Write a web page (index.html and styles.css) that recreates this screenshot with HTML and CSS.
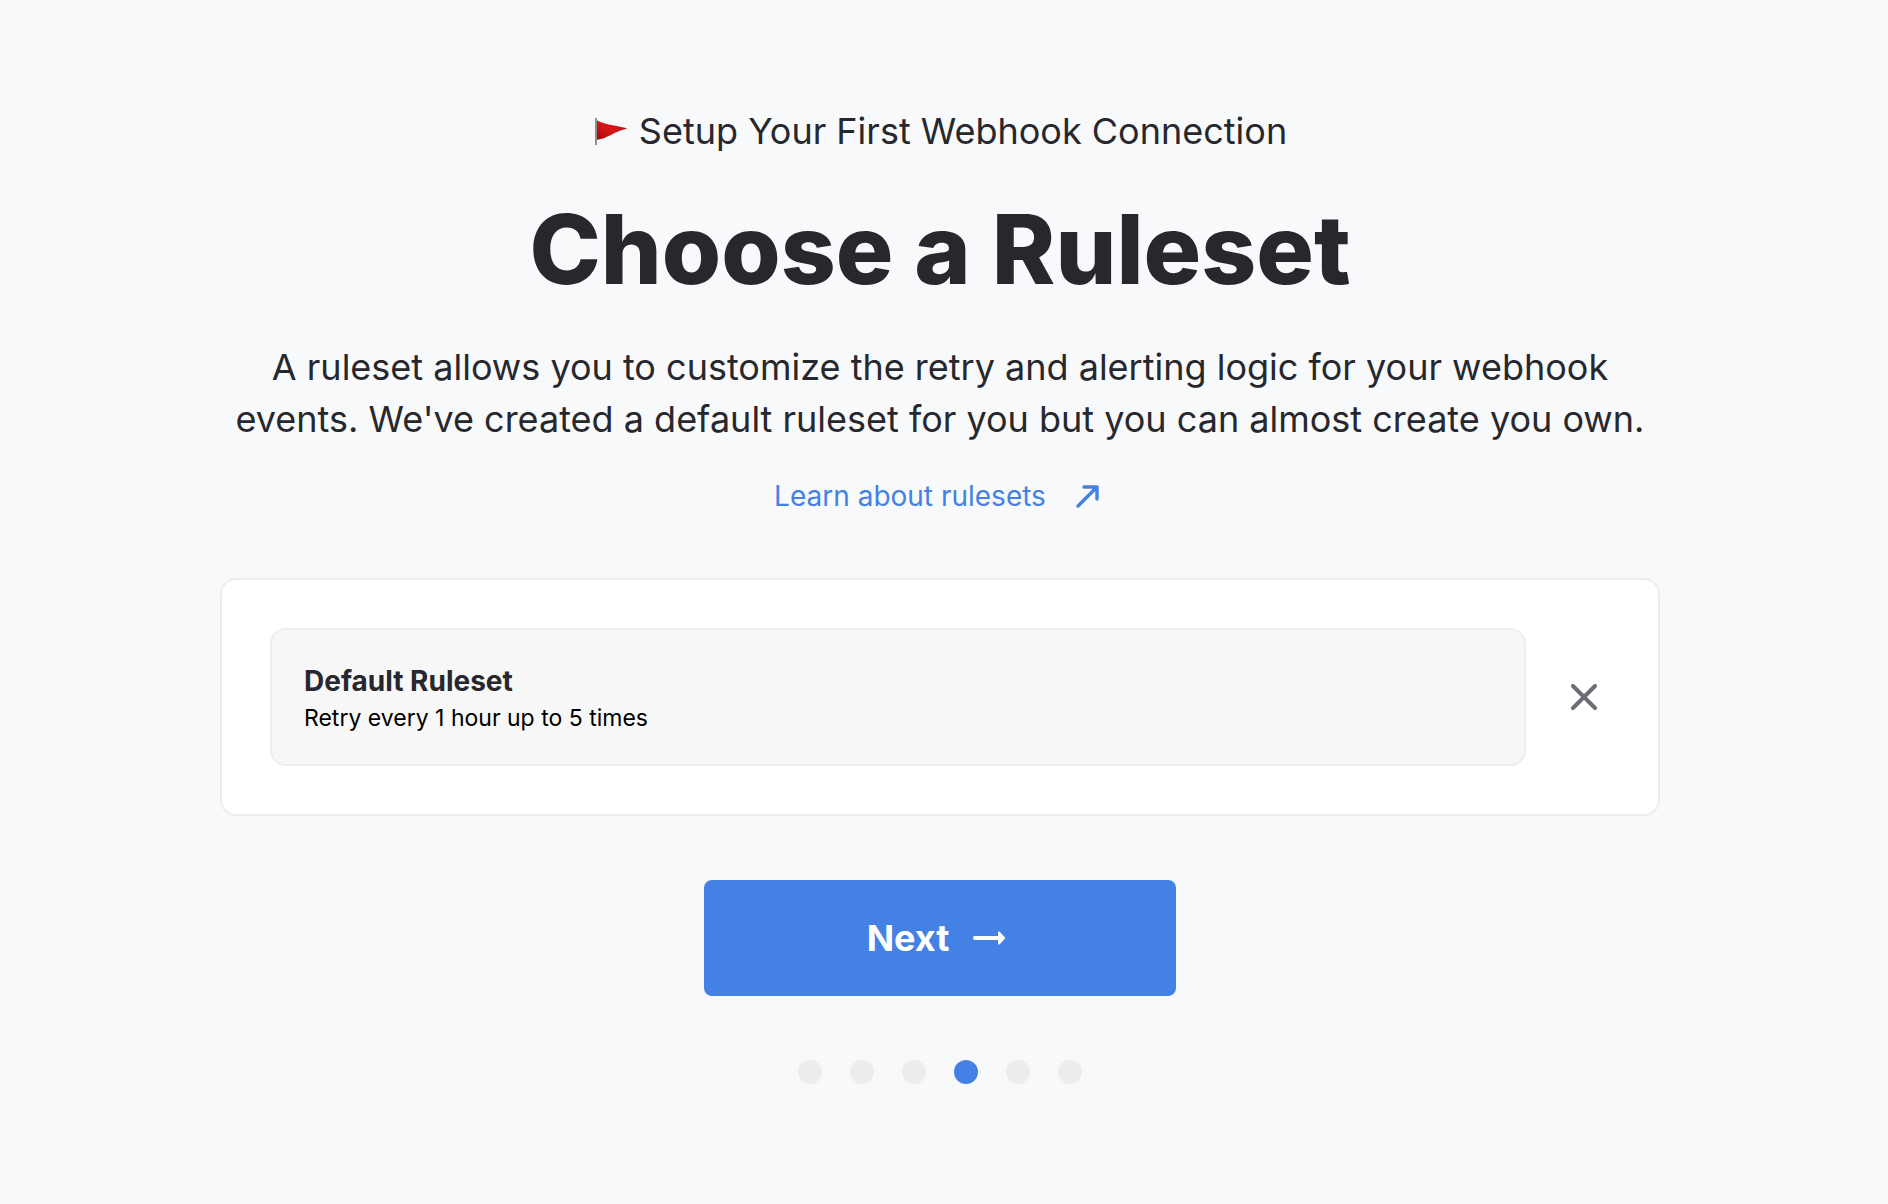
FILE: index.html
```html
<!DOCTYPE html>
<html lang="en">
<head>
<meta charset="utf-8">
<meta name="viewport" content="width=device-width, initial-scale=1">
<title>Choose a Ruleset</title>
<link rel="stylesheet" href="styles.css">
</head>
<body>
<main class="setup">
  <p class="eyebrow">
    <svg class="flag" viewBox="0 0 36 32" aria-hidden="true">
      <defs><linearGradient id="cloth" x1="0" y1="1" x2="1" y2="0"><stop offset="0" stop-color="#a50808"/><stop offset=".5" stop-color="#d81717"/><stop offset="1" stop-color="#b51010"/></linearGradient></defs>
      <path d="M3 5C10 9 20 10 33 13C34 13 34 14 33 14C22 16 14 24 3 25Z" fill="url(#cloth)"/>
      <path d="M3 3V30" stroke="#8b9094" stroke-width="2"/>
    </svg>
    Setup Your First Webhook Connection
  </p>
  <h1 class="title">Choose a Ruleset</h1>
  <p class="intro">A ruleset allows you to customize the retry and alerting logic for your webhook events. We've created a default ruleset for you but you can almost create you own.</p>
  <a class="learn" href="#rulesets">Learn about rulesets
    <svg class="learn-icon" viewBox="0 0 24 24" aria-hidden="true"><path d="M2 22L21 3M8 3H21V15" fill="none" stroke="currentColor" stroke-width="3.4" stroke-linecap="round" stroke-linejoin="round"/></svg>
  </a>
  <section class="panel">
    <div class="ruleset">
      <h2 class="ruleset-name">Default Ruleset</h2>
      <p class="ruleset-detail">Retry every 1 hour up to 5 times</p>
    </div>
    <button class="remove" type="button" aria-label="Remove ruleset">
      <svg class="remove-icon" viewBox="0 0 26 26" aria-hidden="true"><path d="M2 2L24 24M24 2L2 24" fill="none" stroke="currentColor" stroke-width="4" stroke-linecap="round"/></svg>
    </button>
  </section>
  <button class="next" type="button">Next
    <svg class="next-icon" viewBox="0 0 32 16" aria-hidden="true"><path d="M2 8H26" stroke="currentColor" stroke-width="4" stroke-linecap="round"/><path d="M26 2.5L31 8L26 13.5Z" fill="currentColor" stroke="currentColor" stroke-width="2" stroke-linejoin="round"/></svg>
  </button>
  <ol class="steps" aria-label="Setup progress">
    <li class="step"></li><li class="step"></li><li class="step"></li>
    <li class="step current" aria-current="step"></li>
    <li class="step"></li><li class="step"></li>
  </ol>
</main>
</body>
</html>
```
FILE: styles.css
```css
* { box-sizing: border-box; }
body { margin: 0; min-height: 100vh; background: #f8f9fb; color: #27282d; font-family: Inter, "Liberation Sans", sans-serif; }
.setup { display: flex; flex-direction: column; align-items: center; width: 100%; max-width: 1456px; margin: 0 auto; padding: 104px 8px 40px 0; }
h1, h2, p { margin: 0; }
.eyebrow { display: flex; align-items: center; gap: 10px; font-size: 36px; line-height: 54px; }
.flag { width: 36px; height: 32px; }
.title { margin-top: 32px; font-size: 96px; line-height: 118px; font-weight: 800; }
.intro { max-width: 1440px; margin-top: 33px; font-size: 36px; line-height: 52px; text-align: center; }
.learn { display: flex; align-items: center; gap: 30px; margin-top: 32px; padding-right: 6px; font-size: 28px; line-height: 38px; color: #4481e4; text-decoration: none; }
.learn-icon { width: 24px; height: 24px; }
.panel { display: flex; align-items: center; width: 100%; max-width: 1440px; margin-top: 63px; padding: 48px; background: #fff; border: 2px solid #ecedef; border-radius: 16px; }
.ruleset { flex: 1; padding: 32px 32px 28px; background: #f7f7f7; border: 2px solid #ededef; border-radius: 16px; }
.ruleset-name { font-size: 28px; line-height: 38px; }
.ruleset-detail { color: #000; font-size: 23px; line-height: 36px; }
.remove { display: flex; margin-left: 45px; padding: 0 13px 0 0; border: 0; background: none; color: #6c6d75; }
.remove-icon { width: 26px; height: 26px; }
.next { display: flex; align-items: center; justify-content: center; gap: 24px; width: 472px; max-width: 100%; height: 116px; margin-top: 64px; padding: 0 8px 0 0; border: 0; border-radius: 8px; background: #4481e4; color: #fff; font: 700 36px/44px Inter, "Liberation Sans", sans-serif; }
.next-icon { width: 32px; height: 16px; }
.steps { display: flex; gap: 28px; margin: 64px 0 0; padding: 0; list-style: none; }
.step { width: 24px; height: 24px; border-radius: 50%; background: #ecedef; }
.current { background: #4481e4; }
```
